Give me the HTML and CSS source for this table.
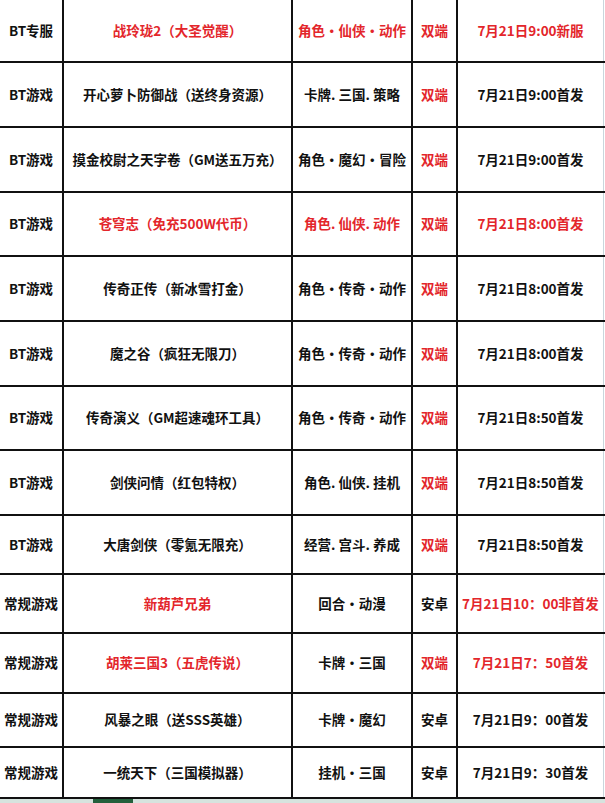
FILE: index.html
```html
<!DOCTYPE html>
<html lang="zh-CN">
<head>
<meta charset="utf-8">
<title>开服表</title>
<link rel="stylesheet" href="styles.css">
</head>
<body>
<div class="sheet">
  <div class="row h63">
    <div class="cell">BT专服</div>
    <div class="cell red">战玲珑2（大圣觉醒）</div>
    <div class="cell red">角色・仙侠・动作</div>
    <div class="cell red">双端</div>
    <div class="cell red last">7月21日9:00新服</div>
  </div>
  <div class="row h65">
    <div class="cell">BT游戏</div>
    <div class="cell">开心萝卜防御战（送终身资源）</div>
    <div class="cell">卡牌. 三国. 策略</div>
    <div class="cell red">双端</div>
    <div class="cell last">7月21日9:00首发</div>
  </div>
  <div class="row h65">
    <div class="cell">BT游戏</div>
    <div class="cell">摸金校尉之天字卷（GM送五万充）</div>
    <div class="cell">角色・魔幻・冒险</div>
    <div class="cell red">双端</div>
    <div class="cell last">7月21日9:00首发</div>
  </div>
  <div class="row h64">
    <div class="cell">BT游戏</div>
    <div class="cell red">苍穹志（免充500W代币）</div>
    <div class="cell red">角色. 仙侠. 动作</div>
    <div class="cell red">双端</div>
    <div class="cell red last">7月21日8:00首发</div>
  </div>
  <div class="row h65">
    <div class="cell">BT游戏</div>
    <div class="cell">传奇正传（新冰雪打金）</div>
    <div class="cell">角色・传奇・动作</div>
    <div class="cell red">双端</div>
    <div class="cell last">7月21日8:00首发</div>
  </div>
  <div class="row h65">
    <div class="cell">BT游戏</div>
    <div class="cell">魔之谷（疯狂无限刀）</div>
    <div class="cell">角色・传奇・动作</div>
    <div class="cell red">双端</div>
    <div class="cell last">7月21日8:00首发</div>
  </div>
  <div class="row h64">
    <div class="cell">BT游戏</div>
    <div class="cell">传奇演义（GM超速魂环工具）</div>
    <div class="cell">角色・传奇・动作</div>
    <div class="cell red">双端</div>
    <div class="cell last">7月21日8:50首发</div>
  </div>
  <div class="row h65">
    <div class="cell">BT游戏</div>
    <div class="cell">剑侠问情（红包特权）</div>
    <div class="cell">角色. 仙侠. 挂机</div>
    <div class="cell red">双端</div>
    <div class="cell last">7月21日8:50首发</div>
  </div>
  <div class="row h59">
    <div class="cell">BT游戏</div>
    <div class="cell">大唐剑侠（零氪无限充）</div>
    <div class="cell">经营. 宫斗. 养成</div>
    <div class="cell red">双端</div>
    <div class="cell last">7月21日8:50首发</div>
  </div>
  <div class="row h59">
    <div class="cell">常规游戏</div>
    <div class="cell red">新葫芦兄弟</div>
    <div class="cell">回合•动漫</div>
    <div class="cell">安卓</div>
    <div class="cell red last">7月21日10：00非首发</div>
  </div>
  <div class="row h60">
    <div class="cell">常规游戏</div>
    <div class="cell red">胡莱三国3（五虎传说）</div>
    <div class="cell">卡牌•三国</div>
    <div class="cell red">双端</div>
    <div class="cell red last">7月21日7：50首发</div>
  </div>
  <div class="row h54">
    <div class="cell">常规游戏</div>
    <div class="cell">风暴之眼（送SSS英雄）</div>
    <div class="cell">卡牌•魔幻</div>
    <div class="cell">安卓</div>
    <div class="cell last">7月21日9：00首发</div>
  </div>
  <div class="row h51">
    <div class="cell">常规游戏</div>
    <div class="cell">一统天下（三国模拟器）</div>
    <div class="cell">挂机•三国</div>
    <div class="cell">安卓</div>
    <div class="cell last">7月21日9：30首发</div>
  </div>
</div>
<div class="strip"><span class="blob"></span></div>
</body>
</html>
```

FILE: styles.css
```css
html, body {
  margin: 0;
  padding: 0;
  background: #ffffff;
}
body {
  width: 605px;
  height: 803px;
  overflow: hidden;
  font-family: "Noto Sans CJK SC", "Liberation Sans", sans-serif;
  font-weight: 700;
  font-size: 13.5px;
  color: #111;
}
.sheet {
  display: flex;
  flex-direction: column;
  width: 605px;
}
.row {
  display: grid;
  grid-template-columns: 64px 229px 120px 45px 146px;
  border-bottom: 2px solid #111;
  box-sizing: border-box;
}
.h63 { height: 63px; }
.h65 { height: 65px; }
.h64 { height: 64px; }
.h60 { height: 60px; }
.h59 { height: 59px; }
.h54 { height: 54px; }
.h51 { height: 51px; }
.cell {
  display: flex;
  align-items: center;
  justify-content: center;
  border-right: 2px solid #111;
  white-space: nowrap;
  overflow: visible;
  line-height: 1;
}
.cell.last {
  border-right: 1px solid #c9d6dc;
}
.red {
  color: #e3262b;
}
.strip {
  height: 4px;
  background: #d6e3de;
  display: flex;
  padding-left: 93px;
}
.blob {
  width: 40px;
  height: 4px;
  background: #23603c;
}
```
